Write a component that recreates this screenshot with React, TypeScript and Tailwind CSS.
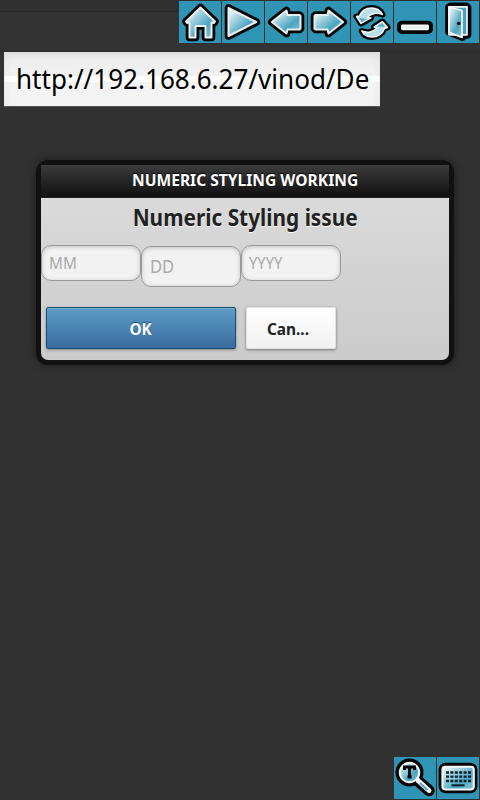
import React from "react";

const FONT = "font-['Noto_Sans','Open_Sans',sans-serif]";

function Outlined({ d }: { d: string }) {
  return (
    <>
      <path d={d} fill="#050505" stroke="#050505" strokeWidth="7.6" strokeLinejoin="round" />
      <path d={d} fill="url(#ice)" stroke="#e9eff1" strokeWidth="2" strokeLinejoin="round" />
    </>
  );
}

function Tile({ children }: { children: React.ReactNode }) {
  return (
    <div className="h-[42px] w-[42px] shrink-0 bg-[#3094b4]">
      <svg viewBox="0 0 42 42" className="block h-[42px] w-[42px]">
        <defs>
          <linearGradient id="ice" x1="0" y1="0" x2="1" y2="1">
            <stop offset="0.1" stopColor="#e4f2f6" />
            <stop offset="0.65" stopColor="#4ba5c0" />
            <stop offset="1" stopColor="#8cc6d8" />
          </linearGradient>
        </defs>
        {children}
      </svg>
    </div>
  );
}

const ARC_TOP = "M5.5 15.5 L8.5 15 C10.5 10 15 7 20.5 7 C25.5 7 29.5 9.3 31.5 13.5 C26.5 11.6 20 11.8 16.8 16.2 L20 17 L10 22.5 Z";
const ARC_BOTTOM = "M36.5 26.5 L33.5 27.5 C31.5 33 26.5 36 21 36 C16.5 36 12.5 34 10.8 30 C16 32.3 22.5 31.3 25.8 27 L23 26 L31.3 20.5 Z";

function TopBar() {
  return (
    <div className="flex h-[42px] justify-end gap-px pr-px">
      <Tile>
        <Outlined d="M21.5 6.5 L36 20.5 L35 22 L32.5 21.5 V36.5 H26.5 V25 H16.5 V36.5 H10.5 V21.5 L8 22 L7 20.5 Z" />
      </Tile>
      <Tile>
        <Outlined d="M6.5 7 V35 L34.3 21 Z" />
      </Tile>
      <Tile>
        <Outlined d="M6.8 21 L21.5 9.5 L22.5 14 H34.5 L35.5 15 V27.5 L34.5 28.5 H22.5 L21.5 32.5 Z" />
      </Tile>
      <Tile>
        <Outlined d="M35.2 21 L20.5 9.5 L19.5 14 H7.5 L6.5 15 V27.5 L7.5 28.5 H19.5 L20.5 32.5 Z" />
      </Tile>
      <Tile>
        <g strokeLinejoin="round">
          <path d={ARC_TOP} fill="#050505" stroke="#050505" strokeWidth="6" />
          <path d={ARC_BOTTOM} fill="#050505" stroke="#050505" strokeWidth="6" />
          <path d={ARC_TOP} fill="#b9dfea" stroke="#f1f5f6" strokeWidth="1.4" />
          <path d={ARC_BOTTOM} fill="#b9dfea" stroke="#f1f5f6" strokeWidth="1.4" />
          <path d="M8 17 L16 18 L10.5 21 Z" fill="#58adc7" />
          <path d="M34 25.8 L26 25.5 L31 22 Z" fill="#58adc7" />
        </g>
      </Tile>
      <Tile>
        <rect x="3" y="19.7" width="36" height="13.3" rx="5" fill="#050505" />
        <rect x="7" y="23.6" width="28" height="5.6" rx="1.4" fill="#f7f7f7" />
        <rect x="8.2" y="25.6" width="25.6" height="1.8" fill="#e6eef1" />
      </Tile>
      <Tile>
        <path d="M11.5 6 L13 5 H29.5 L31 6.5 V34 L26 35.5 L25.5 36.5 L11.5 31 Z" fill="#050505" stroke="#050505" strokeWidth="6.8" strokeLinejoin="round" />
        <path d="M12 5.8 H30 V33.8 H12 Z" fill="#49a3bf" stroke="#f4f6f7" strokeWidth="1.7" strokeLinejoin="round" />
        <path d="M12 6 L25 9.5 V36.3 L12 31.3 Z" fill="url(#ice)" stroke="#f4f6f7" strokeWidth="1.8" strokeLinejoin="round" />
        <circle cx="21.7" cy="22.5" r="1.8" fill="#071519" />
      </Tile>
    </div>
  );
}

function BottomBar() {
  return (
    <div className="flex h-[42px] justify-end gap-px pr-px">
      <Tile>
        <path d="M23.5 23.5 L35 33.5" stroke="#050505" strokeWidth="11.5" strokeLinecap="round" />
        <circle cx="15.5" cy="15.5" r="14" fill="#050505" />
        <path d="M24 23.5 L35 33.5" stroke="#f5f7f8" strokeWidth="5" strokeLinecap="round" />
        <path d="M26 26 L33.5 33" stroke="#4ba5c0" strokeWidth="1.8" />
        <circle cx="15.5" cy="15.5" r="9.7" fill="url(#ice)" stroke="#f5f7f8" strokeWidth="2" />
        <path d="M10.5 13 V10 H20.5 V13 M15.5 10 V20.5 M13.5 20 H17.5" fill="none" stroke="#050505" strokeWidth="3" />
      </Tile>
      <Tile>
        <rect x="1.6" y="5.8" width="38.8" height="30.4" rx="7" fill="#050505" />
        <rect x="5.4" y="9.8" width="31.4" height="22.6" rx="2.8" fill="url(#ice)" stroke="#f5f7f8" strokeWidth="2" />
        <path d="M9 15.5 H34 M9 19.7 H34 M9 24 H34" stroke="#0b2029" strokeWidth="2.3" strokeDasharray="3 1.4" />
        <path d="M14.5 28.3 H27.5" stroke="#0b2029" strokeWidth="2" />
      </Tile>
    </div>
  );
}

const field =
  "w-[100px] rounded-[10px] border border-[#999] bg-[#f2f2f2] shadow-[inset_0_1px_4px_rgba(0,0,0,0.2)] text-[#aaa] whitespace-nowrap";

export default function App() {
  return (
    <div className={`flex h-[800px] w-[480px] flex-col overflow-hidden bg-[#313131] ${FONT}`}>
      <div className="h-[52px] bg-[linear-gradient(#303030_0_11px,#292929_11px_12px,#333333_12px_49px,#2b2b2b_52px)] pt-px">
        <TopBar />
      </div>

      <div className="ml-1 flex h-[54px] w-[376px] items-center overflow-hidden bg-[linear-gradient(#ececec,#f1f1f1_24px,#ffffff_24px_30px,#f3f3f3_30px)] pl-3 shadow-[inset_0_3px_7px_rgba(0,0,0,0.08),0_1px_0_#555]">
        <span className="origin-left scale-x-[0.965] whitespace-nowrap text-[27px] leading-[54px] text-black">
          http://192.168.6.27/vinod/De
        </span>
      </div>

      <div className="ml-9 mt-[54px] h-[205px] w-[418px] shrink-0 rounded-[12px] border-[5px] border-[#111] bg-[#111] shadow-[0_0_8px_rgba(0,0,0,0.45)]">
        <div className="h-[33px] border-b border-[#222] bg-gradient-to-b from-[#3c3c3c] to-[#111] text-center text-[16px] font-bold leading-[31px] text-white [text-shadow:0_-1px_1px_#000]">
          <span className="inline-block scale-x-[0.974] whitespace-nowrap">NUMERIC STYLING WORKING</span>
        </div>
        <div className="h-[162px] rounded-b-[7px] bg-gradient-to-b from-[#dadada] to-[#cbcbcb]">
          <div className="h-[47px] text-center text-[23px] font-bold leading-[39px] text-[#222] [text-shadow:0_1px_0_#fff]">
            <span className="inline-block scale-x-[0.906] whitespace-nowrap">Numeric Styling issue</span>
          </div>
          <div className="flex h-[62px] items-start">
            <div className={`${field} h-9 pl-[7px] text-[16px] leading-[35px]`}>
              <span className="inline-block origin-left scale-x-[0.96]">MM</span>
            </div>
            <div className={`${field} mt-px h-[41px] pl-2 text-[18px] leading-[39px]`}>
              <span className="inline-block origin-left scale-x-[0.92]">DD</span>
            </div>
            <div className={`${field} h-9 pl-[7px] text-[16px] leading-[35px]`}>
              <span className="inline-block origin-left scale-x-[0.92]">YYYY</span>
            </div>
          </div>
          <div className="flex gap-[10px] pl-[5px]">
            <div className="h-[42px] w-[190px] rounded-[2px] border border-[#145072] bg-gradient-to-b from-[#5f9cc5] to-[#396b9e] text-center text-[16px] font-bold leading-[42px] text-white shadow-[0_1px_3px_rgba(0,0,0,0.35),inset_0_1px_0_#79abc9] [text-shadow:0_-1px_1px_#145072]">
              <span className="inline-block scale-x-[0.96]">OK</span>
            </div>
            <div className="h-[42px] w-[90px] rounded-[2px] border border-[#e1e1e1] bg-gradient-to-b from-white to-[#f1f1f1] pl-5 text-left text-[16px] font-bold leading-[42px] text-[#222] shadow-[0_1px_3px_rgba(0,0,0,0.45)]">
              <span className="inline-block origin-left scale-x-[0.96]">Can...</span>
            </div>
          </div>
        </div>
      </div>

      <div className="mt-auto pb-px">
        <BottomBar />
      </div>
    </div>
  );
}
